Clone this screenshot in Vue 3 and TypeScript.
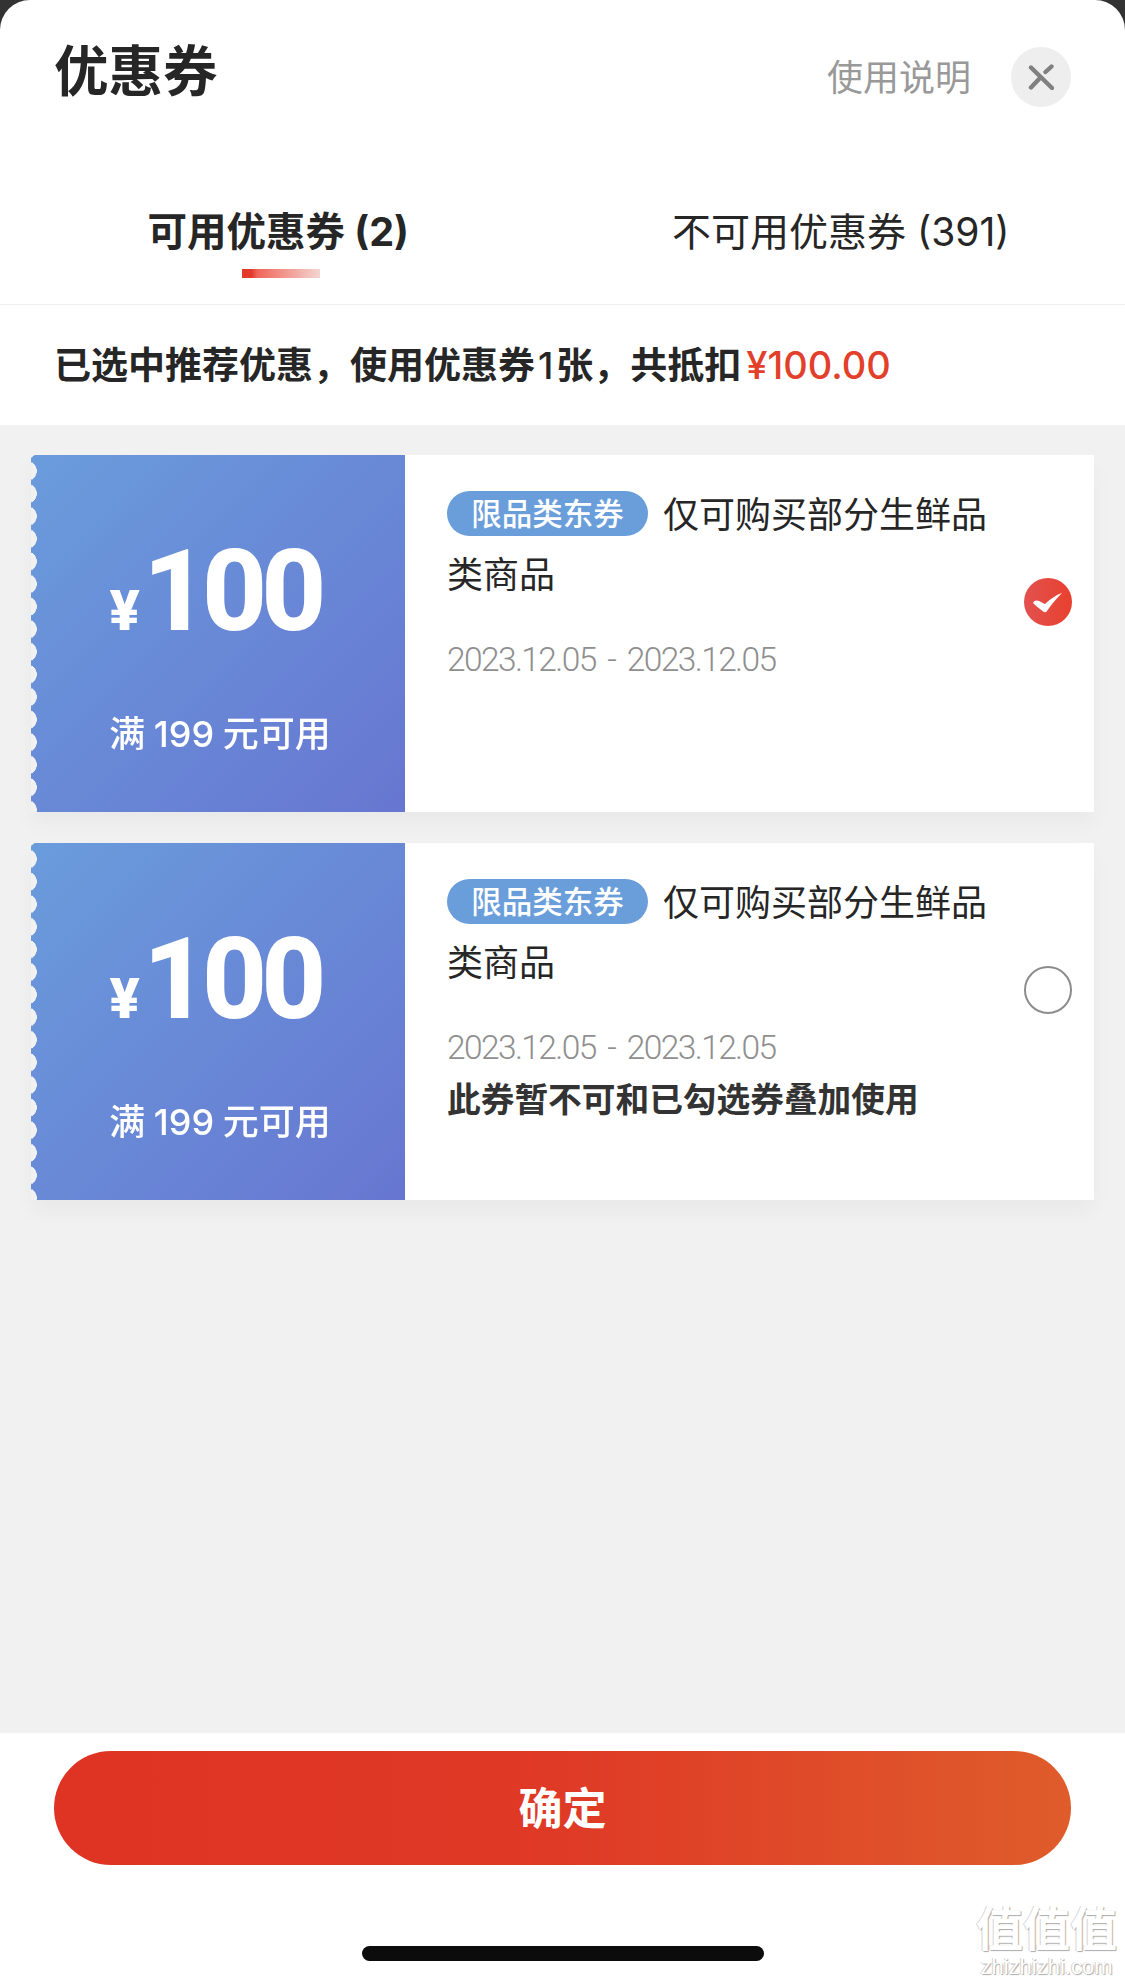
<script setup lang="ts">
interface Coupon {
  id: number
  selected: boolean
  note: string
}

const coupons: Coupon[] = [
  { id: 1, selected: true, note: '' },
  { id: 2, selected: false, note: '此券暂不可和已勾选券叠加使用' },
]
</script>

<template>
  <div class="sheet">
    <header class="head">
      <h1 class="title">优惠券</h1>
      <div class="head-right">
        <span class="help">使用说明</span>
        <span class="close">
          <svg width="26" height="26" viewBox="0 0 26 26">
            <path d="M3 3.5 24 24M17.5 8 23.5 2.5M12 14 3 23.5" stroke="#808080" stroke-width="4.4" stroke-linecap="round" fill="none" />
          </svg>
        </span>
      </div>
    </header>

    <nav class="tabs">
      <div class="tab active">
        <span>可用优惠券 (2)</span>
        <i class="tab-line"></i>
      </div>
      <div class="tab">
        <span>不可用优惠券 (391)</span>
      </div>
    </nav>

    <div class="summary">
      已选中推荐优惠，使用优惠券<span class="count">1</span>张，共抵扣<em class="price">¥100.00</em>
    </div>

    <main class="list">
      <article v-for="c in coupons" :key="c.id" class="coupon">
        <div class="coupon-left">
          <div class="amount"><span class="yen">¥</span><span class="num">100</span></div>
          <div class="limit">满 199 元可用</div>
        </div>
        <div class="coupon-main">
          <div class="coupon-body">
            <div class="desc"><span class="tag">限品类东券</span>仅可购买部分生鲜品类商品</div>
            <div class="date">2023.12.05 - 2023.12.05</div>
            <div v-if="c.note" class="note">{{ c.note }}</div>
          </div>
          <div class="radio" :class="{ checked: c.selected }">
            <svg v-if="c.selected" width="48" height="48" viewBox="0 0 48 48">
              <path d="M9 25C10 22 13 22 15 23L21 26C26 21 32 17 38 15C32 21 27 27 23 33C22 34.5 20.5 34.5 19 33.5C16 31 12 28 9 25Z" fill="#fff" />
            </svg>
          </div>
        </div>
      </article>
    </main>

    <footer class="foot">
      <button class="confirm">确定</button>
      <div class="home-bar"></div>
    </footer>

    <div class="watermark">
      <div class="wm-logo">值值值</div>
      <div class="wm-url">zhizhizhi.com</div>
    </div>
  </div>
</template>

<style>
html,
body {
  margin: 0;
  background: #333;
}
</style>

<style scoped>
.sheet {
  position: relative;
  width: 1125px;
  height: 1985px;
  display: flex;
  flex-direction: column;
  background: #fff;
  border-radius: 30px 30px 0 0;
  overflow: hidden;
  color: #262626;
  font-family: Inter, "Noto Sans CJK SC", sans-serif;
}

.head {
  display: flex;
  justify-content: space-between;
  align-items: flex-start;
  height: 172px;
  padding: 36px 54px 0 54px;
  box-sizing: border-box;
}

.title {
  margin: 0;
  font-size: 54.5px;
  line-height: 70px;
  font-weight: 700;
}

.head-right {
  display: flex;
  align-items: center;
  gap: 40px;
  margin-top: 11px;
}

.help {
  font-size: 36px;
  color: #999;
  padding-bottom: 5px;
}

.close {
  width: 60px;
  height: 60px;
  border-radius: 50%;
  background: #eee;
  display: flex;
  align-items: center;
  justify-content: center;
}

.tabs {
  display: flex;
  height: 132px;
  border-bottom: 1px solid #efefef;
}

.tab {
  position: relative;
  flex: 1;
  text-align: center;
  font-size: 39px;
  line-height: 60px;
  padding: 30px 6px 0 0;
}

.tab.active {
  font-size: 39.5px;
  font-weight: 700;
}

.tab-line {
  position: absolute;
  left: 242px;
  top: 97px;
  width: 78px;
  height: 9px;
  background: linear-gradient(90deg, #e2392a 0, #e2392a 12%, #f0665a 20%, #f3d5d1 100%);
}

.summary {
  height: 120px;
  padding-left: 54px;
  font-size: 37px;
  line-height: 120px;
  font-weight: 600;
  background: #fff;
}

.count {
  margin: 0 3px;
  font-weight: 500;
}

.price {
  font-style: normal;
  font-size: 38px;
  font-weight: 500;
  color: #e2402b;
  margin-left: 5px;
}

.list {
  flex: 1;
  padding: 30px 31px 0;
  background: #f1f1f1;
  display: flex;
  flex-direction: column;
  gap: 31px;
}

.coupon {
  display: flex;
  height: 357px;
  box-shadow: 0 12px 20px rgba(0, 0, 0, 0.035);
}

.coupon-left {
  width: 374px;
  flex-shrink: 0;
  background: linear-gradient(135deg, #6a9cdc 0%, #6776d1 100%);
  border-radius: 4px 0 0 4px;
  color: #fff;
  text-align: center;
  -webkit-mask: radial-gradient(circle 10px at -4px 50%, transparent 96%, #000 100%) 0 4.7px / 100% 22.6px repeat-y;
  mask: radial-gradient(circle 10px at -4px 50%, transparent 96%, #000 100%) 0 4.7px / 100% 22.6px repeat-y;
}

.amount {
  display: flex;
  align-items: baseline;
  justify-content: center;
  height: 190px;
  padding-top: 82px;
  padding-right: 6px;
  box-sizing: border-box;
  font-family: Roboto, sans-serif;
  font-weight: 800;
  line-height: 110px;
}

.yen {
  font-size: 56px;
  font-weight: 900;
  margin-right: 3px;
}

.num {
  font-size: 113px;
  letter-spacing: -6px;
}

.limit {
  margin-top: 64px;
  padding-left: 4px;
  font-size: 36px;
  line-height: 50px;
  font-weight: 500;
  word-spacing: -1px;
}

.coupon-main {
  flex: 1;
  display: flex;
  background: #fff;
}

.coupon-body {
  flex: 1;
  padding: 30px 0 0 42px;
}

.desc {
  width: 560px;
  font-size: 36px;
  line-height: 60px;
}

.tag {
  display: inline-block;
  height: 45px;
  width: 201px;
  margin-right: 15px;
  border-radius: 23px;
  background: #6a9edb;
  color: #fff;
  font-size: 30.5px;
  font-weight: 500;
  line-height: 45px;
  text-align: center;
  vertical-align: 3px;
}

.date {
  margin-top: 33px;
  font-family: Roboto, sans-serif;
  font-weight: 300;
  font-size: 33.5px;
  letter-spacing: -1.6px;
  word-spacing: 5px;
  line-height: 44px;
  color: #8f8f8f;
}

.note {
  margin-top: 8px;
  font-size: 33.7px;
  line-height: 44px;
  font-weight: 700;
  color: #333;
}

.radio {
  width: 48px;
  height: 48px;
  flex-shrink: 0;
  margin: 123px 22px 0 0;
  border-radius: 50%;
  box-sizing: border-box;
  border: 2px solid #8c8c8c;
}

.radio.checked {
  border: 0;
  background: linear-gradient(90deg, #e2524f, #e8402e);
}

.foot {
  height: 252px;
  padding-top: 18px;
  box-sizing: border-box;
  background: #fff;
}

.confirm {
  display: block;
  width: 1017px;
  height: 114px;
  margin: 0 0 0 54px;
  padding: 0 0 5px;
  border: 0;
  border-radius: 57px;
  background: linear-gradient(90deg, #df3324 0%, #df3a26 50%, #df5c2b 100%);
  color: #fff;
  font-family: inherit;
  font-size: 44px;
  font-weight: 700;
}

.home-bar {
  width: 402px;
  height: 15px;
  margin: 81px 0 0 362px;
  border-radius: 8px;
  background: #0c0c0c;
}

.watermark {
  position: absolute;
  right: 8px;
  bottom: 6px;
  width: 141px;
  text-align: center;
  color: #fff;
  text-shadow: 1px 1px 1px #aaa, -1px 0 0 #d5d5d5;
}

.wm-logo {
  font-size: 47px;
  line-height: 52px;
  font-weight: 700;
}

.wm-url {
  font-size: 22px;
  line-height: 24px;
  font-family: "Liberation Sans", sans-serif;
}
</style>
